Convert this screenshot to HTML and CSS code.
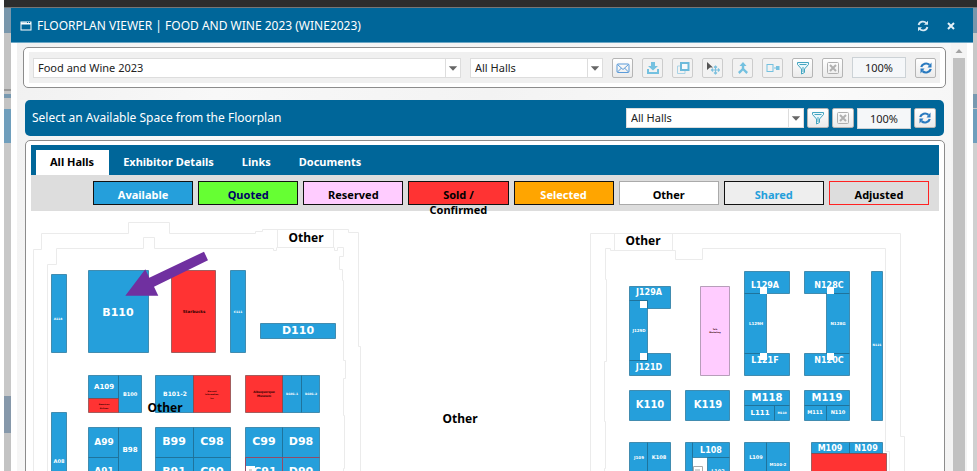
FILE: index.html
```html
<!DOCTYPE html>
<html lang="en">
<head>
<meta charset="utf-8">
<title>Floorplan Viewer</title>
<link rel="stylesheet" href="styles.css">
</head>
<body>
<div class="topbar"></div>
<div class="stage">
  <div class="backdrop backdrop-left"></div>
  <main class="window">
    <header class="titlebar">
      <svg class="title-icon" width="12" height="10" viewBox="0 0 12 10"><rect x="1" y="1" width="10" height="8" fill="none" stroke="#fff"/><path d="M1 2.5h10" stroke="#fff" stroke-width="2"/><path d="M7 1.5h1M9 1.5h1" stroke="#069"/></svg>
      <h1>FLOORPLAN VIEWER | FOOD AND WINE 2023 (WINE2023)</h1>
      <button class="title-btn" aria-label="Reload"><svg width="12" height="12" viewBox="0 0 12 12" fill="none" stroke="#d8eaf4" stroke-width="1.8"><path d="M1.6 5a4.4 4.4 0 0 1 7.8-1.7M10.4 7a4.4 4.4 0 0 1-7.8 1.7"/><path d="M11 .8v4H7zM1 11.2v-4h4z" fill="#d8eaf4" stroke="none"/></svg></button>
      <button class="title-btn" aria-label="Close"><svg width="8" height="8" viewBox="0 0 8 8" stroke="#e4f1f8" stroke-width="2"><path d="M1 1l6 6M7 1L1 7"/></svg></button>
    </header>
    <div class="body">
      <div class="content">
        <section class="panel toolbar-panel">
          <div class="toolbar">
            <div class="combo combo-event"><select aria-label="Event"><option>Food and Wine 2023</option></select><svg class="arrow" viewBox="0 0 15 18"><path d="M3 7h9l-4.500 5z"/></svg></div>
            <div class="combo combo-hall"><select aria-label="Hall"><option>All Halls</option></select><svg class="arrow" viewBox="0 0 15 18"><path d="M3 7h9l-4.500 5z"/></svg></div>
            <div class="tools">
              <button class="tool" aria-label="Email"><svg viewBox="0 0 14 14" fill="none" stroke="#5b9bd9"><rect x="1" y="3" width="12" height="8.500" rx="1"/><path d="M1.500 3.500L7 8.500l5.500-5M1.500 11l4-4M12.500 11l-4-4"/></svg></button>
              <button class="tool off" aria-label="Download"><svg viewBox="0 0 14 14" fill="#74c1e0"><path d="M5 1h4v4h3L7 9.500 2 5h3z"/><path d="M1 8h2v3h8V8h2v5H1z"/></svg></button>
              <button class="tool off" aria-label="Copy"><svg viewBox="0 0 14 14" fill="none"><path d="M1.500 5h7.500v7.500H1.500z" stroke="#a9d3e6"/><rect x="5" y="2" width="7.500" height="7" fill="#f4f9fc" stroke="#6bbadb" stroke-width="2"/></svg></button>
              <button class="tool off" aria-label="Move"><svg viewBox="0 0 14 14"><path d="M1 1l6 5.500H4L1 9z" fill="#555"/><path d="M9.500 5v8M5.500 9h8M8 6.500l1.500-1.500L11 6.500M8 11.500L9.500 13l1.500-1.500M7 7.500L5.500 9 7 10.500M12 7.500L13.500 9 12 10.500" fill="none" stroke="#7cc0de" stroke-width="1.200"/></svg></button>
              <button class="tool off" aria-label="Merge"><svg viewBox="0 0 14 14"><path d="M7 1l3.500 4H8.200v2.500L12 11l-1.600 2L7 9.500 3.600 13 2 11l3.800-3.500V5H3.500z" fill="#74c1e0"/></svg></button>
              <button class="tool off" aria-label="Split"><svg viewBox="0 0 14 14"><rect x="1" y="3.500" width="6" height="7" fill="none" stroke="#74c1e0"/><path d="M8 7h2" stroke="#74c1e0"/><rect x="10" y="5" width="3.500" height="4" fill="#74c1e0"/></svg></button>
              <button class="tool" aria-label="Filter"><svg viewBox="0 0 14 14" fill="#eaf7fb" stroke="#44a5c0"><path d="M1.500 1.500h11v2L8.500 8v3.500l-3 1.500V8L1.500 3.500z"/><path d="M3.500 3.500h7M7 6v5" fill="none"/></svg></button>
              <button class="tool" aria-label="Clear"><svg viewBox="0 0 14 14" fill="none" stroke="#b0b0b0"><rect x="1.500" y="1.500" width="11" height="11" rx="1"/><path d="M4 4l6 6M10 4l-6 6" stroke-width="2"/></svg></button>
              <input class="zoom" aria-label="Zoom" value="100%">
              <button class="tool" aria-label="Refresh"><svg viewBox="0 0 14 14" fill="none" stroke="#2879bf" stroke-width="2.200"><path d="M2.200 6a5 4.600 0 0 1 8.300-2.200M11.800 8a5 4.600 0 0 1-8.300 2.200"/><path d="M12.500 1.500v5h-4zM1.500 12.500v-5h4z" fill="#2879bf" stroke="none"/></svg></button>
            </div>
          </div>
        </section>

        <section class="selectbar">
          <h2>Select an Available Space from the Floorplan</h2>
          <div class="combo combo-plan"><select aria-label="Floorplan hall"><option>All Halls</option></select><svg class="arrow" viewBox="0 0 15 18"><path d="M3 7h9l-4.500 5z"/></svg></div>
          <button class="tool" aria-label="Filter spaces"><svg viewBox="0 0 14 14" fill="#eaf7fb" stroke="#44a5c0"><path d="M1.500 1.500h11v2L8.500 8v3.500l-3 1.500V8L1.500 3.500z"/><path d="M3.500 3.500h7M7 6v5" fill="none"/></svg></button>
          <button class="tool" aria-label="Clear filter"><svg viewBox="0 0 14 14" fill="none" stroke="#b0b0b0"><rect x="1.500" y="1.500" width="11" height="11" rx="1"/><path d="M4 4l6 6M10 4l-6 6" stroke-width="2"/></svg></button>
          <input class="zoom" aria-label="Floorplan zoom" value="100%">
          <button class="tool" aria-label="Refresh floorplan"><svg viewBox="0 0 14 14" fill="none" stroke="#2879bf" stroke-width="2.200"><path d="M2.200 6a5 4.600 0 0 1 8.300-2.200M11.800 8a5 4.600 0 0 1-8.300 2.200"/><path d="M12.500 1.500v5h-4zM1.500 12.500v-5h4z" fill="#2879bf" stroke="none"/></svg></button>
        </section>

        <section class="panel plan-panel">
          <nav class="tabs">
            <a href="#halls" class="tab active">All Halls</a>
            <a href="#exhibitor" class="tab">Exhibitor Details</a>
            <a href="#links" class="tab">Links</a>
            <a href="#documents" class="tab">Documents</a>
          </nav>
          <div class="legend">
            <div class="key available">Available</div>
            <div class="key quoted">Quoted</div>
            <div class="key reserved">Reserved</div>
            <div class="key sold">Sold / Confirmed</div>
            <div class="key selected">Selected</div>
            <div class="key other">Other</div>
            <div class="key shared">Shared</div>
            <div class="key adjusted">Adjusted</div>
          </div>
          <svg class="plan" viewBox="31 211 908 280">
            <g class="wall">
              <path d="M33.500 491V249.500H41.500V233.500H128.500V222.500H169.500V233.500H255.500V231.500H262.500V229.500H348.500V232.500H358.500V346.500H360.500V491"/>
              <path d="M47.500 491V264.500H56.500V248.500H143.500V237.500H154.500V248.500H273.500V250.500H276.500V247.500M334.500 247.500V250.500H337.500V247.500H343.500V256.500H339.500V269.500H342.500V280.500H343.500V360.500H345.500V378.500H343.500V415.500H344.500V468.500H343.500V491"/>
              <path d="M590.500 491V233.500H900.500V436.500H904.500V491"/>
              <path d="M604.500 491V468.500H605.500V421.500H604.500V361.500H606.500V279.500H605.500V248.500H610.500V250.500H614.500M672.500 250.500H675.500V259.500H702.500V248.500H885.500V451.500H889.500V491"/>
              <rect x="277.500" y="229.500" width="56" height="18"/>
              <rect x="614.500" y="233.500" width="58" height="17"/>
            </g>
            <g class="booth">
              <path d="M51.500 274.500h15v78h-15zM88.500 270.500h60v82h-60zM230.500 270.500h15v82h-15zM260.500 323.500h75v15h-75z"/>
              <path d="M88.500 375.500h30v23h-30zM118.500 375.500h23v37h-23zM155.500 375.500h38v37h-38zM282.500 375.500h19v37h-19zM301.500 375.500h18v37h-18zM51.500 412.500h15v80h-15z"/>
              <path d="M88.500 427.500h30v30h-30zM88.500 457.500h30v40h-30zM118.500 427.500h23v70h-23zM155.500 427.500h38v30h-38zM193.500 427.500h37v30h-37zM155.500 457.500h38v40h-38zM193.500 457.500h37v40h-37z"/>
              <path d="M245.500 427.500h37v30h-37zM282.500 427.500h37v30h-37zM245.500 457.500h37v40h-37zM282.500 457.500h37v40h-37z"/>
              <path d="M629.500 286.500h41v22h-23v-8h-18zM629.500 300.500h18v60h-18zM647.500 353.500h23v22h-41v-15h18z"/>
              <path d="M744.500 271.500h45v22h-45zM744.500 293.500h22v60h-22zM744.500 353.500h45v22h-45zM804.500 271.500h45v22h-45zM826.500 293.500h23v60h-23zM804.500 353.500h45v22h-45zM871.500 271.500h11v149h-11z"/>
              <path d="M629.500 390.500h41v30h-41zM685.500 390.500h44v30h-44zM744.500 390.500h45v15h-45zM744.500 405.500h30v15h-30zM774.500 405.500h15v15h-15zM804.500 390.500h45v15h-45zM804.500 405.500h22v15h-22zM826.500 405.500h23v15h-23z"/>
              <path d="M629.500 442.500h18v50h-18zM647.500 442.500h23v50h-23zM685.500 442.500h7v50h-7zM692.500 442.500h37v15h-37zM707.500 457.500h22v40h-22zM744.500 442.500h22v50h-22zM766.500 442.500h23v50h-23zM811.500 442.500h38v11h-38zM849.500 442.500h33v11h-33z"/>
            </g>
            <g class="booth taken">
              <path d="M171.500 270.500h44v82h-44zM88.500 398.500h30v14h-30zM193.500 375.500h37v37h-37zM245.500 375.500h37v37h-37zM811.500 453.500h75v40h-75z"/>
            </g>
            <path class="booth held" d="M700.500 286.500h29v89h-29z"/>
            <path class="conflict" d="M245.500 491V457.500H282.500V491M282.500 457.500H319.500"/>
            <path class="pillar" d="M246 466h9v12h-9z"/>
            <g class="white-text">
              <g class="s11"><text x="118" y="316">B110</text><text x="298" y="334">D110</text><text x="174" y="445">B99</text><text x="212" y="445">C98</text><text x="264" y="445">C99</text><text x="301" y="445">D98</text><text x="174" y="475">B91</text><text x="212" y="475">C90</text><text x="265" y="475">C91</text><text x="301" y="475">D90</text></g>
              <g class="s10"><text x="650" y="408">K110</text><text x="708" y="408">K119</text><text x="767" y="401">M118</text><text x="827" y="401">M119</text></g>
              <g class="s9"><text x="104" y="445">A99</text><text x="104" y="474">A91</text></g>
              <g class="s8"><text x="765" y="288">L129A</text><text x="829" y="288">N128C</text><text x="765" y="363">L121F</text><text x="829" y="363">N120C</text><text x="711" y="453">L108</text><text x="649" y="295">J129A</text><text x="649" y="370">J121D</text><text x="830" y="451">M109</text><text x="866" y="451">N109</text></g>
              <g class="s7"><text x="104" y="389">A109</text><text x="130" y="452">B98</text><text x="760" y="415">L111</text></g>
              <g class="s6"><text x="175" y="396">B101-2</text></g>
              <g class="s5"><text x="659" y="459">K108</text><text x="130" y="396">B100</text><text x="59" y="463">A08</text><text x="815" y="414">M111</text><text x="838" y="414">N110</text><text x="756" y="459">L109</text><text x="718" y="473">L102</text></g>
              <g class="s4"><text x="756" y="325">L129H</text><text x="838" y="325">N128G</text><text x="639" y="459">J109</text><text x="778" y="466">M100-2</text><text x="639" y="332">J129D</text></g>
              <g class="s3"><text x="58" y="320">A118</text><text x="238" y="313">C111</text><text x="292" y="395">D101-1</text><text x="311" y="395">D101-2</text><text x="782" y="414">M110</text><text x="877" y="346">N121</text></g>
            </g>
            <g class="dark-text">
              <text class="s4" x="194" y="313">Starbucks</text>
              <text class="s3" x="264" y="393">Albuquerque</text><text class="s3" x="264" y="397">Museum</text>
              <text class="s2" x="104" y="405">American</text><text class="s2" x="104" y="409">Airlines</text>
              <text class="s2" x="212" y="392">Harvest</text><text class="s2" x="212" y="395">Information,</text><text class="s2" x="212" y="399">Inc</text>
              <text class="s2" x="715" y="330">Talk</text><text class="s2" x="715" y="333">Marketing</text>
            </g>
            <path class="pillar" d="M640 301h7v7h-7zM640 353h7v7h-7zM760 287h7v7h-7zM760 353h7v7h-7zM827 287h7v7h-7zM827 353h7v7h-7zM693 458h14v33h-14z"/>
            <path class="note" d="M693.500 466.500h9v20h-9zM695 470h5M249 470h3"/>
            <g class="area">
              <text x="306" y="242">Other</text><text x="643" y="245">Other</text><text x="165" y="412">Other</text><text x="460" y="423">Other</text>
            </g>
            <path class="pointer" d="M125.300 295.700L145.300 269.300L149.300 277.700L204 251.700L208 260.300L154 286.700L158.300 295.700Z"/>
          </svg>
        </section>
      </div>
      <div class="scroll"><svg width="8" height="5" viewBox="0 0 8 5"><path d="M4 0l3.500 4h-7z" fill="#a3a3a3"/></svg><div class="thumb"></div></div>
    </div>
  </main>
  <div class="backdrop backdrop-right"></div>
</div>
</body>
</html>
```
FILE: styles.css
```css
* { box-sizing: border-box; }
body {
  margin: 0;
  height: 100vh;
  overflow: hidden;
  display: flex;
  flex-direction: column;
  font: 12px/16px "Noto Sans", "Open Sans", sans-serif;
  color: #333;
  background: #fff;
}
h1, h2 { margin: 0; font-size: 12px; font-weight: 400; color: #fff; }
button, input, select { font: inherit; margin: 0; }
.topbar { flex: none; height: 8px; margin-left: 4px; background: #2d2d2d; border-bottom: 1px solid #777; }
.stage { flex: 1; min-height: 0; display: flex; padding-left: 4px; }
.backdrop { flex: none; }
.backdrop-left {
  width: 7px;
  background: linear-gradient(#7896ab 0 25px, #c3c3c3 25px 81px, #999 81px 83px, #c3c3c3 83px 86px, #7899b0 86px 90px, #c3c3c3 90px 101px, #6f9ebc 101px 135px, #c8c8c8 135px 388px, #8698aa 388px 425px, #c3c3c3 425px);
}
.backdrop-right {
  width: 4px;
  background: linear-gradient(#7896ab 0 25px, #c8c8c8 25px 86px, #7899b0 86px 100px, #c8c8c8 100px 101px, #6f9ebc 101px 135px, #d0d0d0 135px);
}
.window { flex: 1; min-width: 0; display: flex; flex-direction: column; background: #fff; overflow: hidden; }

.titlebar {
  flex: none;
  display: flex;
  align-items: center;
  height: 35px;
  padding: 1px 18px 0 9px;
  background: #069;
  border-bottom: 1px solid #6ba6c4;
}
.titlebar h1 { flex: 1; padding-left: 5px; }
.title-btn { display: flex; padding: 0; border: 0; background: none; margin-left: 18px; }

.body { flex: 1; min-height: 0; display: flex; padding: 0 6px; overflow: hidden; }
.content {
  flex: 1;
  min-width: 0;
  padding: 4px 5px 0 6px;
  background: linear-gradient(110deg, #f1f1f1, #f8f8f8 20%, #f3f3f3 45%, #fafafa 75%, #f3f3f3);
}
.scroll { flex: none; width: 16px; display: flex; flex-direction: column; align-items: center; padding-top: 6px; background: #f4f4f4; }
.thumb { flex: 1; width: 12px; margin-top: 4px; background: #c1c1c1; }

.panel { background: #fff; border: 1px solid #8c8c8c; border-radius: 5px; }
.toolbar-panel { padding: 4px 5px; }
.toolbar { display: flex; align-items: center; gap: 9px; height: 31px; padding: 0 4px; background: #f0f0f0; }
.combo { display: flex; height: 20px; background: #fff; border: 1px solid #ddd; }
.combo select { flex: 1; min-width: 0; padding: 0 4px; border: 0; background: #fff; color: #222; appearance: none; font-size: 11px; line-height: 18px; }
.arrow { flex: none; width: 15px; border-left: 1px solid #ddd; fill: #666; }
.combo-event { flex: 1; }
.combo-hall { width: 133px; }
.tools { display: flex; gap: 9px; align-items: center; }
.tool {
  flex: none;
  display: flex;
  align-items: center;
  justify-content: center;
  width: 21px;
  height: 20px;
  padding: 0;
  border: 1px solid #b5b5b5;
  border-radius: 2px;
  background: linear-gradient(#fff, #ebebeb);
}
.tool svg { flex: none; width: 14px; height: 14px; }
.tool.off { border-color: #ccc; background: #f2f2f2; }
.zoom { width: 54px; height: 21px; padding: 0; text-align: center; font-size: 11px; color: #222; border: 1px solid #ccd2d6; background: #f5f7f9; }

.selectbar {
  display: flex;
  align-items: center;
  gap: 3px;
  height: 36px;
  margin: 12px 2px 4px;
  padding: 0 8px 0 7px;
  background: #069;
  border-radius: 5px;
}
.selectbar h2 { flex: 1; }
.combo-plan { width: 178px; }
.selectbar .tool { width: 22px; }

.plan-panel { margin: 0 1px 0 2px; padding: 4px 5px; border-radius: 5px 5px 0 0; }
.tabs { display: flex; height: 30px; padding: 5px 5px 0; background: #069; }
.tab { padding: 4px 14px 5px; color: #fff; font-size: 11px; font-weight: 700; text-decoration: none; }
.tab.active { padding: 4px 15px 5px 14px; background: #fff; color: #000; }
.legend { display: flex; gap: 5px; height: 36px; padding: 6px 10px 0 62px; background: #ddd; }
.key { flex: 1; height: 24px; padding: 5px 14px 0; border: 1px solid #111; text-align: center; color: #000; font-size: 11px; line-height: 15px; font-weight: 700; }
.available { background: #259fdb; color: #fff; }
.quoted { background: #6f3; color: #006; }
.reserved { background: #fcf; }
.sold { background: #f33; }
.selected { background: orange; color: #fff; }
.other { background: #fff; border-color: #aaa; }
.shared { background: #eee; color: #259fdb; }
.adjusted { border-color: #f22; }

.plan { display: block; width: 100%; height: auto; }
.plan text { text-anchor: middle; }
.wall { fill: none; stroke: #ebebeb; }
.booth { fill: #259fdb; stroke: #1f6f96; stroke-opacity: .7; }
.taken { fill: #f33; stroke: #7c4444; }
.held { fill: #fcf; stroke: #99809c; }
.conflict { fill: none; stroke: #934a66; }
.white-text { fill: #fff; font-family: "DejaVu Sans", sans-serif; font-weight: 700; }
.dark-text { fill: #300; font-family: "DejaVu Sans", sans-serif; font-weight: 700; }
.s11 { font-size: 11px; }
.s10 { font-size: 10px; }
.s9 { font-size: 9px; }
.s8 { font-size: 8px; }
.s7 { font-size: 7px; }
.s6 { font-size: 6px; }
.s5 { font-size: 5px; }
.s4 { font-size: 4px; }
.s3 { font-size: 3px; }
.s2 { font-size: 2px; }
.pillar { fill: #fff; }
.note { fill: none; stroke: #aaa; }
.area { fill: #000; font-size: 12px; font-weight: 700; }
.pointer { fill: #7030a0; }
```
